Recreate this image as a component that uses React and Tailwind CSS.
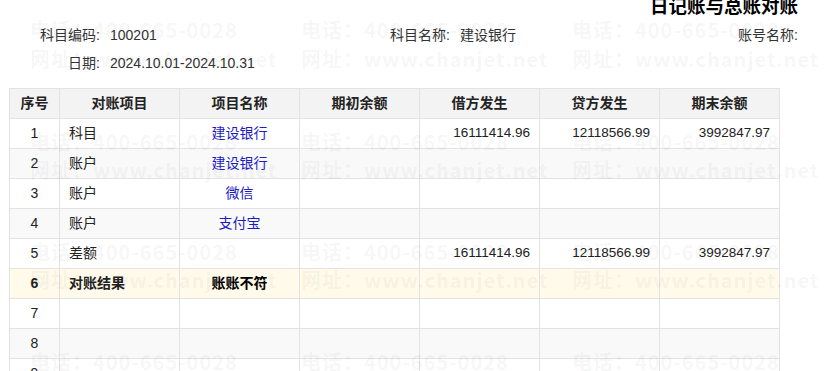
import React from 'react';

const rows = [
  { no: 1, item: '科目', name: '建设银行', open: '', debit: '16111414.96', credit: '12118566.99', end: '3992847.97' },
  { no: 2, item: '账户', name: '建设银行' },
  { no: 3, item: '账户', name: '微信' },
  { no: 4, item: '账户', name: '支付宝' },
  { no: 5, item: '差额', name: '', open: '', debit: '16111414.96', credit: '12118566.99', end: '3992847.97' },
  { no: 6, item: '对账结果', name: '账账不符', result: true },
  { no: 7 },
  { no: 8 },
  { no: 9 },
  { no: 10 },
];

// watermark tiles
const marks = [];
[30, 142, 252, 362].forEach((y) => {
  [30, 301, 572].forEach((x) => marks.push({ x, y: y - 14, text: '电话：400-665-0028' }));
});
[59, 170, 280].forEach((y) => {
  [30, 301, 572].forEach((x) => marks.push({ x, y: y - 14, text: '网址：www.chanjet.net' }));
});

const Reconcile = () => {
  return (
    <div
      className="relative w-[837px] h-[371px] overflow-hidden bg-white text-[14px] text-[#333]"
      style={{ fontFamily: '"Liberation Sans", "Noto Sans CJK SC", sans-serif' }}
    >
      {/* title */}
      <div className="-mt-[5px] h-[24px] pr-[39px] text-right text-[18.5px] leading-[24px] font-bold text-black">
        日记账与总账对账
      </div>

      {/* info */}
      <div className="mt-[2px] px-[39px]">
        <div className="flex h-[28px] items-center">
          <div className="flex w-[351px]">
            <span className="w-[61px] text-right">科目编码:</span>
            <span className="ml-[10px]">100201</span>
          </div>
          <div className="flex">
            <span>科目名称:</span>
            <span className="ml-[10px]">建设银行</span>
          </div>
          <div className="flex-1 text-right">账号名称:</div>
        </div>
        <div className="flex h-[28px] items-center">
          <span className="w-[61px] text-right">日期:</span>
          <span className="ml-[10px]">2024.10.01-2024.10.31</span>
        </div>
      </div>

      {/* table */}
      <div className="mt-[11px] pl-[9px]">
        <table className="table-fixed border-collapse text-[14px] text-[#222]">
          <colgroup>
            <col className="w-[50px]" />
            <col className="w-[120px]" />
            <col className="w-[120px]" />
            <col className="w-[120px]" />
            <col className="w-[120px]" />
            <col className="w-[120px]" />
            <col className="w-[120px]" />
          </colgroup>
          <thead>
            <tr className="h-[30px] bg-[#f3f3f3]">
              {['序号', '对账项目', '项目名称', '期初余额', '借方发生', '贷方发生', '期末余额'].map((h) => (
                <th key={h} className="border border-[#e3e3e3] p-0 text-center font-bold">
                  {h}
                </th>
              ))}
            </tr>
          </thead>
          <tbody>
            {rows.map((r, i) => (
              <tr
                key={r.no}
                className={`h-[30px] ${r.result ? 'bg-[#fffaea] font-bold' : i % 2 === 1 ? 'bg-[#f9f9f9]' : 'bg-white'}`}
              >
                <td className="border border-[#e3e3e3] p-0 text-center">{r.no}</td>
                <td className="border border-[#e3e3e3] px-[9px] py-0 text-left">{r.item}</td>
                <td className={`border border-[#e3e3e3] p-0 text-center ${r.result ? 'text-black' : 'text-[#1c1cc4]'}`}>
                  {r.name}
                </td>
                <td className="border border-[#e3e3e3] px-[9px] py-0 text-right text-[13.5px]">{r.open}</td>
                <td className="border border-[#e3e3e3] px-[9px] py-0 text-right text-[13.5px]">{r.debit}</td>
                <td className="border border-[#e3e3e3] px-[9px] py-0 text-right text-[13.5px]">{r.credit}</td>
                <td className="border border-[#e3e3e3] px-[9px] py-0 text-right text-[13.5px]">{r.end}</td>
              </tr>
            ))}
          </tbody>
        </table>
      </div>

      {/* watermark */}
      <div className="pointer-events-none absolute inset-0">
        {marks.map((m, i) => (
          <div
            key={i}
            className="absolute whitespace-nowrap text-[20px] leading-[28px] font-bold tracking-[1px] text-black/[0.055]"
            style={{ left: m.x, top: m.y, fontFamily: '"Noto Sans CJK SC", "Noto Sans", sans-serif' }}
          >
            {m.text}
          </div>
        ))}
      </div>
    </div>
  );
};

export default function App() {
  return <Reconcile />;
}
